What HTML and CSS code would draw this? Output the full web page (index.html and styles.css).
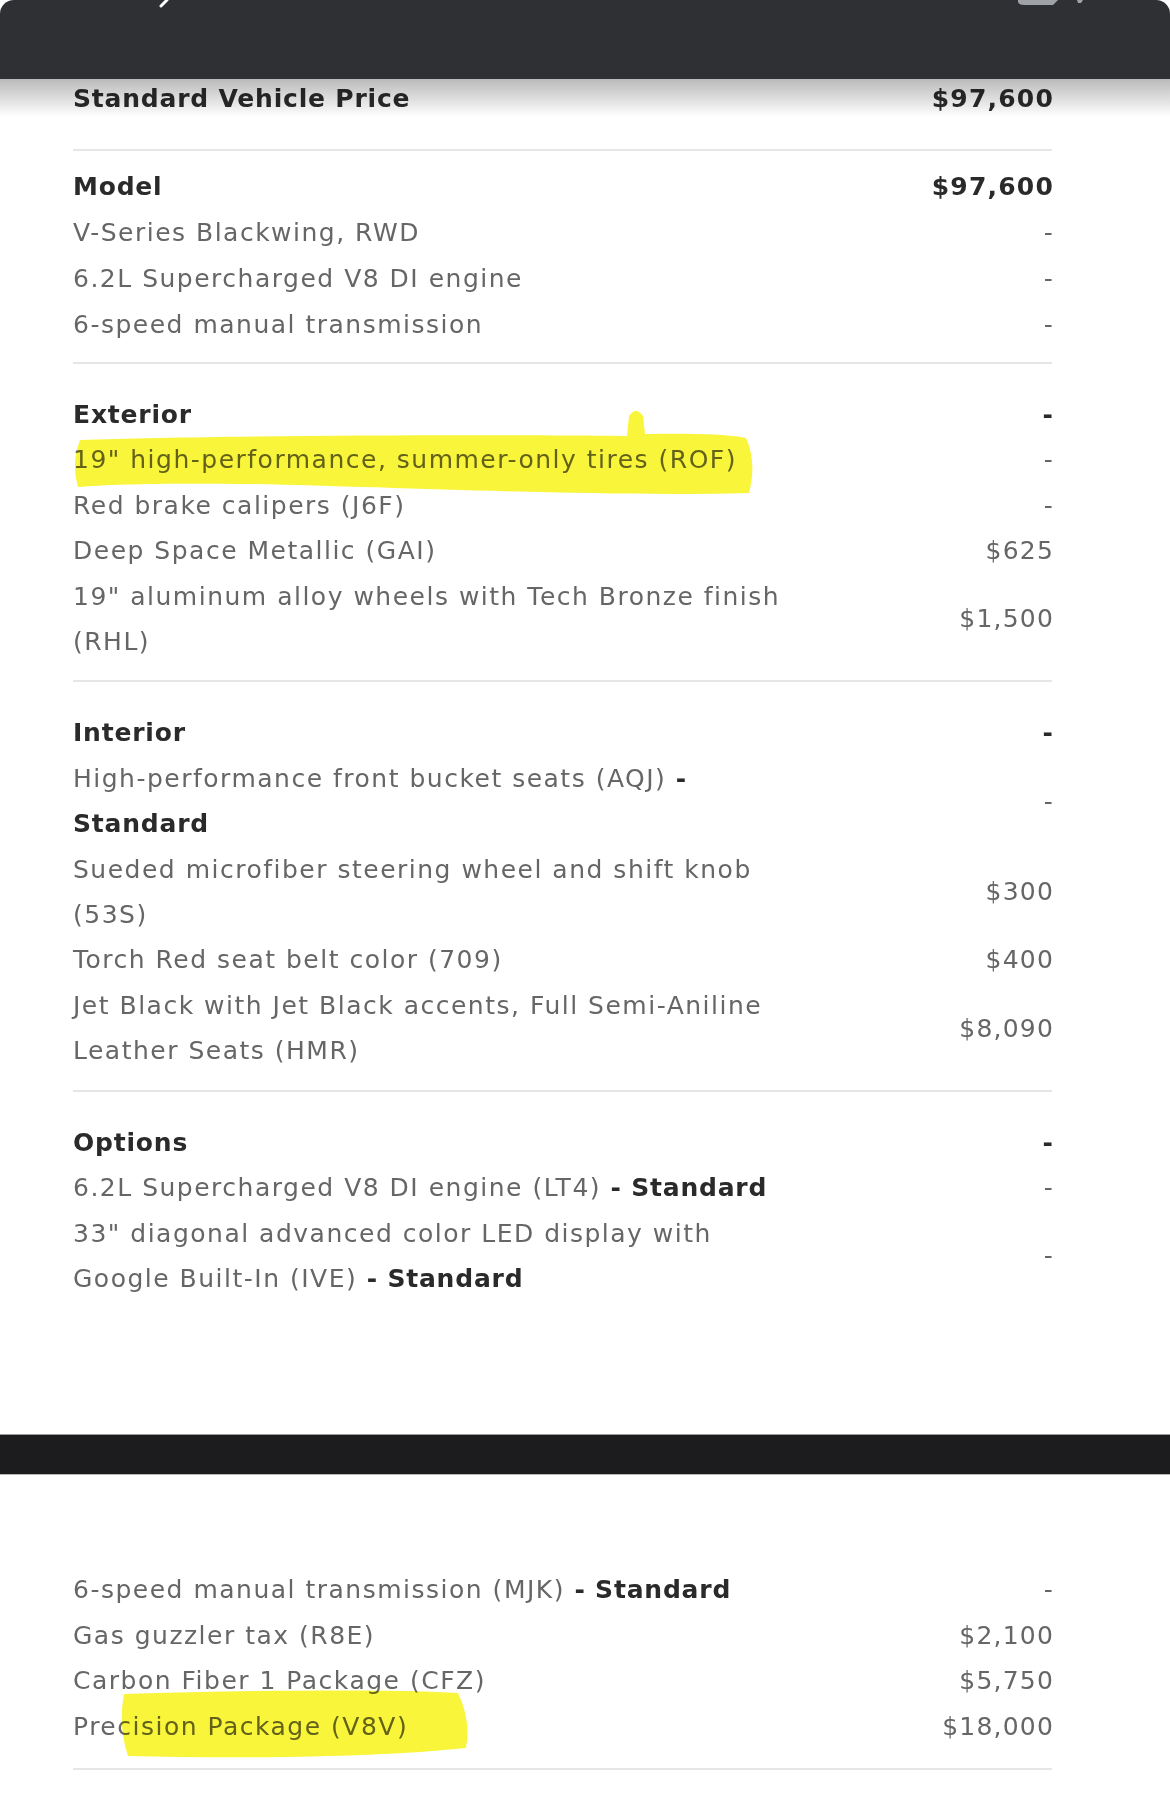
FILE: index.html
```html
<!DOCTYPE html>
<html lang="en">
<head>
    <meta charset="UTF-8">
    <meta name="viewport" content="width=device-width, initial-scale=1.0">
    <title>Vehicle Price Summary</title>
    <link rel="stylesheet" href="styles.css">
</head>
<body>
<div class="page">

    <header class="topbar">
        <svg class="topbar-marks" viewBox="0 0 1170 79" width="1170" height="79">
            <path d="M167 0 L161 6" stroke="#ffffff" stroke-width="3" stroke-linecap="round"/>
            <path d="M1018 0 L1018 2 Q1019 5 1024 5 L1053 5 L1058 0 Z" fill="#9fa3a8"/>
            <path d="M1077 0 L1083 0 L1081 3 L1078 3 Z" fill="#9fa3a8"/>
        </svg>
    </header>

    <div class="summary">
        <div class="total-row">
            <span>Standard Vehicle Price</span>
            <span class="price">$97,600</span>
        </div>

        <section class="group group-model">
            <div class="row head"><span class="name">Model</span><span class="price">$97,600</span></div>
            <div class="row"><span class="name">V-Series Blackwing, RWD</span><span class="price">-</span></div>
            <div class="row"><span class="name">6.2L Supercharged V8 DI engine</span><span class="price">-</span></div>
            <div class="row"><span class="name">6-speed manual transmission</span><span class="price">-</span></div>
        </section>

        <section class="group">
            <div class="row head"><span class="name">Exterior</span><span class="price">-</span></div>
            <div class="row"><span class="name">19" high-performance, summer-only tires (ROF)</span><span class="price">-</span></div>
            <div class="row"><span class="name">Red brake calipers (J6F)</span><span class="price">-</span></div>
            <div class="row"><span class="name">Deep Space Metallic (GAI)</span><span class="price">$625</span></div>
            <div class="row"><span class="name">19" aluminum alloy wheels with Tech Bronze finish<br>(RHL)</span><span class="price">$1,500</span></div>
        </section>

        <section class="group">
            <div class="row head"><span class="name">Interior</span><span class="price">-</span></div>
            <div class="row"><span class="name">High-performance front bucket seats (AQJ) <b>-</b><br><b>Standard</b></span><span class="price">-</span></div>
            <div class="row"><span class="name">Sueded microfiber steering wheel and shift knob<br>(53S)</span><span class="price">$300</span></div>
            <div class="row"><span class="name">Torch Red seat belt color (709)</span><span class="price">$400</span></div>
            <div class="row"><span class="name">Jet Black with Jet Black accents, Full Semi-Aniline<br>Leather Seats (HMR)</span><span class="price">$8,090</span></div>
        </section>

        <section class="group group-open">
            <div class="row head"><span class="name">Options</span><span class="price">-</span></div>
            <div class="row"><span class="name">6.2L Supercharged V8 DI engine (LT4) <b>- Standard</b></span><span class="price">-</span></div>
            <div class="row"><span class="name">33" diagonal advanced color LED display with<br>Google Built-In (IVE) <b>- Standard</b></span><span class="price">-</span></div>
        </section>
    </div>

    <div class="splitbar"></div>

    <div class="summary">
        <section class="group group-cont">
            <div class="row"><span class="name">6-speed manual transmission (MJK) <b>- Standard</b></span><span class="price">-</span></div>
            <div class="row"><span class="name">Gas guzzler tax (R8E)</span><span class="price">$2,100</span></div>
            <div class="row"><span class="name">Carbon Fiber 1 Package (CFZ)</span><span class="price">$5,750</span></div>
            <div class="row"><span class="name">Precision Package (V8V)</span><span class="price">$18,000</span></div>
        </section>
    </div>

    <!-- marker strokes drawn over the screenshot -->
    <svg class="marker" viewBox="0 0 1170 1794" width="1170" height="1794">
        <path d="M80 440 C200 436 450 434 627 436 L629 416 Q636 406 643 416 L645 434 C690 433 730 434 746 438 Q757 462 749 493 C600 497 400 487 250 484 C170 483 110 484 78 487 Q71 464 80 440 Z"/>
        <path d="M124 1694 C250 1690 400 1689 458 1693 Q471 1720 466 1748 C380 1757 250 1759 128 1756 Q118 1726 124 1694 Z"/>
    </svg>

</div>
</body>
</html>
```

FILE: styles.css
```css
body {
    margin: 0;
    background: #ffffff;
    font-family: "DejaVu Sans", Verdana, sans-serif;
    color: #666666;
}
.page {
    position: relative;
    width: 1170px;
    height: 1794px;
    overflow: hidden;
}
.topbar {
    position: relative;
    z-index: 2;
    height: 79px;
    background: #2f3034;
    border-radius: 14px 14px 0 0;
}
.topbar::after {
    content: "";
    position: absolute;
    left: 0;
    right: 0;
    top: 100%;
    height: 38px;
    background: linear-gradient(to bottom, rgba(0, 0, 0, 0.27), rgba(0, 0, 0, 0));
}
.topbar-marks {
    display: block;
}
.summary {
    padding: 0 118px 0 73px;
}
.total-row {
    display: flex;
    justify-content: space-between;
    line-height: 40px;
    font-size: 25px;
    font-weight: bold;
    letter-spacing: 0.8px;
    color: #2a2a2a;
    padding-bottom: 30px;
    border-bottom: 2px solid #e6e6e6;
}
.group {
    padding: 28px 0 16px;
    border-bottom: 2px solid #e6e6e6;
}
.group-model {
    padding: 13px 0 14px;
}
.group-model .row {
    line-height: 46px;
}
.group-open {
    border-bottom: none;
    padding-bottom: 0;
}
.group-cont {
    padding: 92px 0 19px;
}
.row {
    display: flex;
    justify-content: space-between;
    align-items: center;
    font-size: 25px;
    line-height: 45.4px;
    letter-spacing: 1.5px;
}
.name {
    max-width: 716px;
}
.price {
    text-align: right;
    letter-spacing: 1.2px;
    margin-right: -2px;
}
.row b {
    color: #2a2a2a;
    letter-spacing: 0.8px;
}
.row.head {
    font-weight: bold;
    color: #2a2a2a;
    letter-spacing: 0.8px;
}
.splitbar {
    margin-top: 133px;
    height: 39px;
    background: #1c1c1e;
    border-top: 1px solid #9a9a9a;
    border-bottom: 1px solid #b4b4b4;
}
.marker {
    position: absolute;
    top: 0;
    left: 0;
    pointer-events: none;
    mix-blend-mode: multiply;
    fill: #f8f53a;
}
```
